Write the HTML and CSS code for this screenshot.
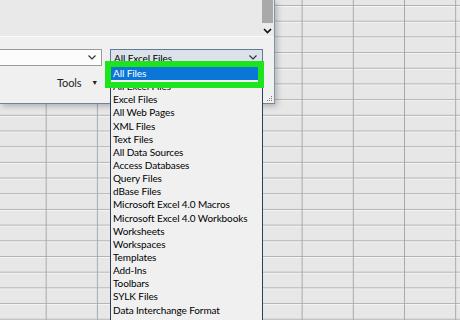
FILE: index.html
```html
<!DOCTYPE html>
<html lang="en">

<head>
    <meta charset="UTF-8">
    <title>Open - File types</title>
    <link rel="stylesheet" href="styles.css">
</head>

<body>
    <div class="screen">
        <div class="dialog">
            <div class="preview">
                <div class="scrollbar">
                    <div class="thumb"></div>
                    <svg class="scroll-arrow" width="9" height="6" viewBox="0 0 9 6"><path d="M1 1 L4.5 4.5 L8 1" fill="none" stroke="#111" stroke-width="1.6"/></svg>
                </div>
            </div>
            <div class="controls">
                <div class="combo name-combo">
                    <svg class="chevron" width="8" height="5" viewBox="0 0 8 5"><path d="M0.5 0.5 L4 4 L7.5 0.5" fill="none" stroke="#333" stroke-width="1.2"/></svg>
                </div>
                <div class="combo type-combo">
                    <span>All Excel Files</span>
                    <svg class="chevron" width="8" height="5" viewBox="0 0 8 5"><path d="M0.5 0.5 L4 4 L7.5 0.5" fill="none" stroke="#333" stroke-width="1.2"/></svg>
                </div>
                <div class="tools">Tools <span class="caret">&#9660;</span></div>
            </div>
            <svg class="grip" width="7" height="7" viewBox="0 0 7 7"><g fill="#777"><rect x="5" y="1" width="1" height="1"/><rect x="3" y="3" width="1" height="1"/><rect x="5" y="3" width="1" height="1"/><rect x="1" y="5" width="1" height="1"/><rect x="3" y="5" width="1" height="1"/><rect x="5" y="5" width="1" height="1"/></g></svg>
        </div>

        <ul class="filetypes">
            <li class="selected">All Files</li>
            <li>All Excel Files</li>
            <li>Excel Files</li>
            <li>All Web Pages</li>
            <li>XML Files</li>
            <li>Text Files</li>
            <li>All Data Sources</li>
            <li>Access Databases</li>
            <li>Query Files</li>
            <li>dBase Files</li>
            <li>Microsoft Excel 4.0 Macros</li>
            <li>Microsoft Excel 4.0 Workbooks</li>
            <li>Worksheets</li>
            <li>Workspaces</li>
            <li>Templates</li>
            <li>Add-Ins</li>
            <li>Toolbars</li>
            <li>SYLK Files</li>
            <li>Data Interchange Format</li>
        </ul>

        <div class="callout"></div>
    </div>
</body>

</html>
```

FILE: styles.css
```css
* {
    box-sizing: border-box;
    margin: 0;
    padding: 0;
}

body {
    width: 460px;
    height: 320px;
    overflow: hidden;
    font-family: 'Lato', 'Liberation Sans', sans-serif;
    font-size: 10px;
    letter-spacing: -0.1px;
    color: #000;
}

/* spreadsheet behind the dialog */
.screen {
    position: relative;
    width: 460px;
    height: 320px;
    overflow: hidden;
    background-color: #e7e7e7;
    background-image:
        linear-gradient(to right, #a4aab3 1px, transparent 1px),
        linear-gradient(to bottom, #b2b2b2 1px, #f6f6f6 1px, #f6f6f6 2px, transparent 2px);
    background-size: 51.2px 100%, 100% 15.7px;
    background-position: 45.7px 0, 0 5px;
}

.dialog {
    position: absolute;
    left: 0;
    top: 0;
    width: 275px;
    height: 104px;
    background: #f0f0f0;
    border-right: 1px solid #8393a8;
    border-bottom: 1px solid #6f8299;
    box-shadow: 2px 2px 6px rgba(0, 0, 0, 0.25);
}

.preview {
    display: flex;
    justify-content: flex-end;
    height: 37px;
    padding-right: 1px;
    background: #e9e9e9;
    border-bottom: 1px solid #fafafa;
}

.scrollbar {
    display: flex;
    flex-direction: column;
    align-items: center;
    width: 11px;
    background: #ebebeb;
}

.thumb {
    width: 100%;
    height: 23px;
    background: #a9a9a9;
}

.scroll-arrow {
    margin-top: 5px;
}

.controls {
    display: grid;
    grid-template-columns: 104px 153px;
    column-gap: 8px;
    row-gap: 10px;
    padding-top: 12px;
    margin-left: -2px;
}

.combo {
    display: flex;
    align-items: center;
    height: 17px;
    padding: 0 5px 0 3px;
    border: 1px solid #9a9a9a;
    background: #fcfcfc;
}

.chevron {
    margin-left: auto;
}

.type-combo {
    background: #dce2e9;
    border-color: #5f7b98;
}

.tools {
    grid-column: 1;
    justify-self: end;
    padding-right: 4px;
    font-size: 11px;
    color: #222;
}

.caret {
    margin-left: 7px;
    font-size: 7px;
    vertical-align: 2px;
}

.grip {
    position: absolute;
    right: 1px;
    bottom: 1px;
}

/* open drop-down of file types */
.filetypes {
    position: absolute;
    left: 110px;
    top: 66px;
    width: 153px;
    height: 270px;
    padding-top: 1px;
    list-style: none;
    background: #f0f0f0;
    border-left: 1px solid #2e4159;
    border-right: 1px solid #2e4159;
}

.filetypes li {
    height: 13.15px;
    line-height: 13px;
    padding-left: 2px;
    white-space: nowrap;
}

.filetypes .selected {
    background: #0a76d8;
    color: #fff;
}

/* green highlight box */
.callout {
    position: absolute;
    left: 105px;
    top: 61px;
    width: 159px;
    height: 27px;
    border: 6px solid #1de51d;
}
```
